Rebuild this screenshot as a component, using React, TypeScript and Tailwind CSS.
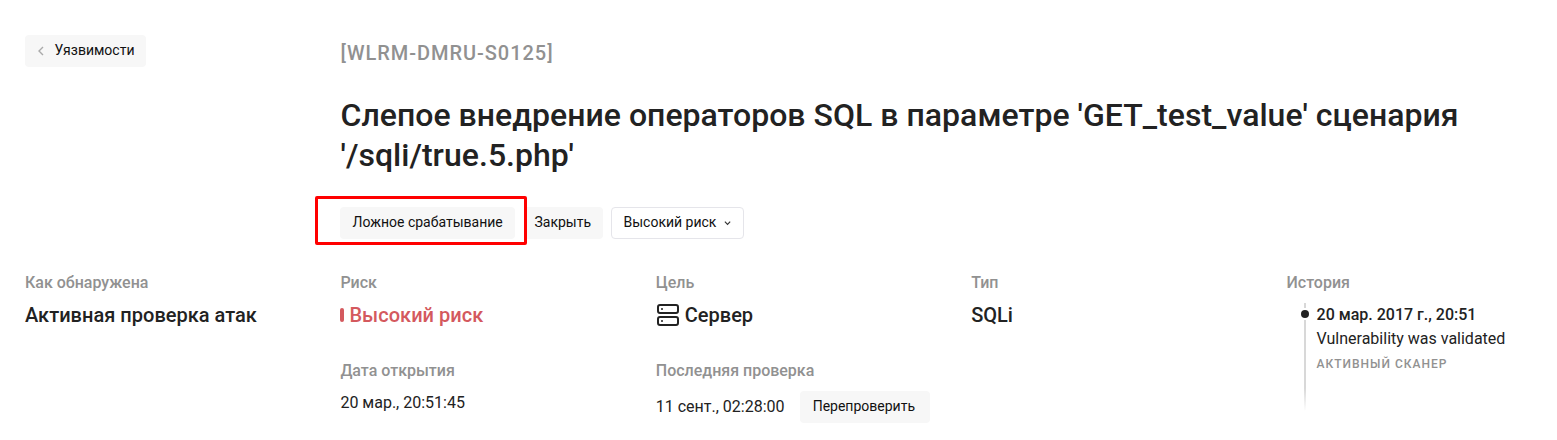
import React from "react";

function Button({ children, className = "" }: { children: React.ReactNode; className?: string }) {
  return (
    <button className={`flex h-8 items-center whitespace-nowrap rounded-[4px] bg-[#f7f7f7] px-3 pb-0.5 text-sm leading-5 text-[#111] ${className}`}>
      {children}
    </button>
  );
}

function Label({ children }: { children: React.ReactNode }) {
  return <div className="text-base font-medium leading-6 text-[#919191]">{children}</div>;
}

export default function App() {
  return (
    <main className="h-[440px] w-[1557px] overflow-hidden bg-white pl-[25px] pt-[35px] font-['Roboto',sans-serif] text-[#222]">
      <div className="flex">
        <div className="w-[315.5px] shrink-0">
          <Button className="w-[121px] !pl-[11.6px]">
            <svg width="8" height="10" viewBox="0 0 8 10" className="mr-2.5 mt-0.5 shrink-0" fill="none" stroke="#aaa" strokeWidth="1.4">
              <path d="M6 1 2 5l4 4" />
            </svg>
            Уязвимости
          </Button>
        </div>
        <div className="w-[1180px]">
          <div className="h-[60px] pt-1 text-xl font-medium leading-7 tracking-[0.96px] text-[#919191]">[WLRM-DMRU-S0125]</div>
          <h1 className="text-[32px] font-medium leading-10 tracking-[0.03px]">
            Слепое внедрение операторов SQL в параметре 'GET_test_value' сценария<br />'/sqli/true.5.php'
          </h1>
          <div className="-ml-[25.5px] mt-[21px] flex items-start">
            <div className="h-[49px] w-[212px] rounded-[2px] border-3 border-[#ff0000] pl-[22px] pt-2">
              <Button className="w-[175px] !pl-[12.5px]">Ложное срабатывание</Button>
            </div>
            <Button className="mt-[11px] w-[76px] rounded-l-none !pl-[7.5px]">Закрыть</Button>
            <Button className="ml-2 mt-[11px] w-[133px] border border-[#e5e5ea] bg-white !px-[11.5px]">
              Высокий риск
              <svg width="8" height="6" viewBox="0 0 8 6" className="ml-2 mt-0.5" fill="none" stroke="#333" strokeWidth="1.3">
                <path d="m1 1.5 3 3 3-3" />
              </svg>
            </Button>
          </div>
        </div>
      </div>
      <div className="mt-[26px] grid grid-cols-[315.4px_315.4px_315.4px_315.4px_1fr]">
        <section>
          <Label>Как обнаружена</Label>
          <div className="mt-1 text-xl font-medium leading-8 tracking-[0.02px]">Активная проверка атак</div>
        </section>
        <section>
          <Label>Риск</Label>
          <div className="mt-1 flex items-center text-xl font-medium leading-8 tracking-[0.04px] text-[#d4595e]">
            <span className="-ml-[0.4px] mr-[5.4px] h-[14px] w-1 rounded-[2px] bg-[#d4595e]" />Высокий риск
          </div>
          <div className="mt-7"><Label>Дата открытия</Label></div>
          <div className="mt-2 text-base leading-6">20 мар., 20:51:45</div>
        </section>
        <section>
          <Label>Цель</Label>
          <div className="mt-1 flex items-center text-xl font-medium leading-8">
            <svg width="24" height="24" viewBox="0 0 24 24" className="mr-[5px]" fill="none" stroke="#222" strokeWidth="2">
              <rect x="2" y="2" width="20" height="8" rx="2" />
              <rect x="2" y="14" width="20" height="8" rx="2" />
              <circle cx="6" cy="6" r="1" fill="#222" stroke="none" />
              <circle cx="6" cy="18" r="1" fill="#222" stroke="none" />
            </svg>
            Сервер
          </div>
          <div className="mt-7"><Label>Последняя проверка</Label></div>
          <div className="mt-2 flex items-center text-base leading-6">
            11 сент., 02:28:00<Button className="ml-[15.5px] w-[130px] !pl-[12.6px]">Перепроверить</Button>
          </div>
        </section>
        <section>
          <Label>Тип</Label>
          <div className="mt-1 text-xl font-medium leading-8">SQLi</div>
        </section>
        <section>
          <Label>История</Label>
          <div className="mt-2 flex">
            <div className="ml-[12.4px] flex w-[17.6px] shrink-0">
              <div className="flex w-3 flex-col items-center">
                <div className="h-[5px] w-0.5 bg-[#d8d8d8]" />
                <div className="my-0.5 size-2 shrink-0 rounded-full bg-[#222]" />
                <div className="h-[91px] w-0.5 bg-linear-to-b from-[#d8d8d8] from-75% to-white" />
              </div>
            </div>
            <div className="whitespace-nowrap">
              <div className="text-base font-medium leading-6">20 мар. 2017 г., 20:51</div>
              <div className="text-base leading-6">Vulnerability was validated</div>
              <div className="mt-px text-xs font-medium leading-6 tracking-[1px] text-[#919191]">АКТИВНЫЙ СКАНЕР</div>
            </div>
          </div>
        </section>
      </div>
    </main>
  );
}
